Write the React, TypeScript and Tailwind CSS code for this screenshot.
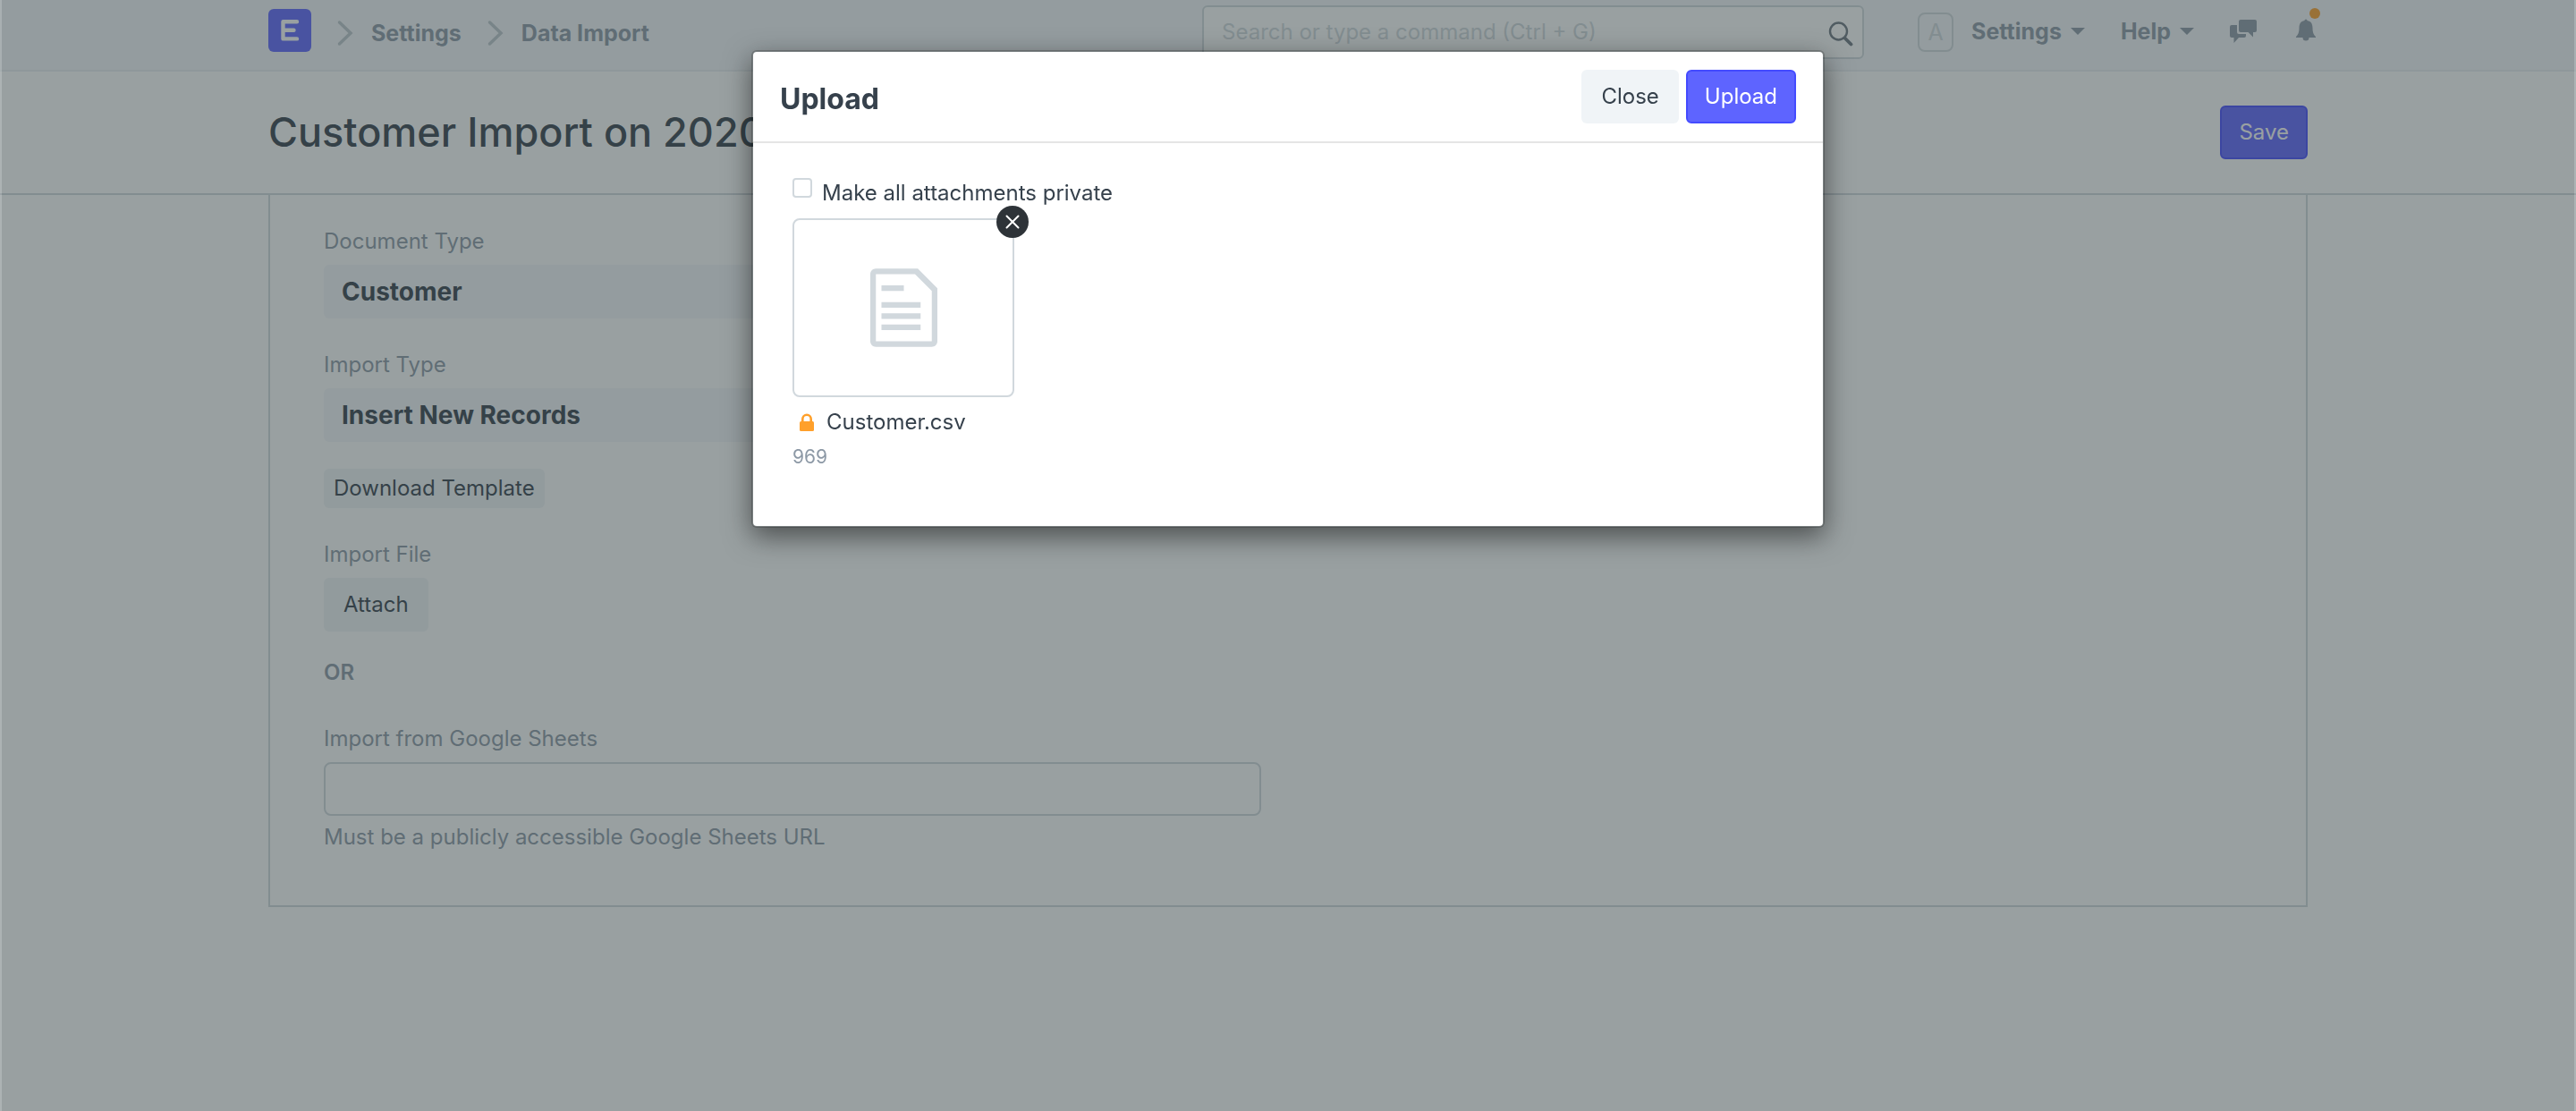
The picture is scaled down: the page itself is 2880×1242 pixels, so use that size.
function Chevron() {
  return (
    <svg width="18" height="30" viewBox="0 0 18 30" fill="none" className="shrink-0" aria-hidden="true">
      <path d="M2.500 3 15 15 2.500 27" stroke="#bdc6cc" strokeWidth="3.500" strokeLinecap="round" />
    </svg>
  );
}

function Caret() {
  return (
    <svg width="16" height="8" viewBox="0 0 16 8" className="shrink-0" aria-hidden="true">
      <path d="M0 0h16L8 8z" fill="currentColor" />
    </svg>
  );
}

function Navbar() {
  return (
    <nav className="h-20 border-b-2 border-[#ebeff2] bg-[#f5f7fa]">
      <div className="mx-auto flex h-full max-w-[2280px] items-start">
        <a href="#home" aria-label="Home" className="mt-2.5 shrink-0">
          <svg width="48" height="48" viewBox="0 0 48 48" aria-hidden="true">
            <rect width="48" height="48" rx="6" fill="#5e64ff" />
            <path
              d="M32 14.2H16.5v19.2H32M16.5 23.7h12"
              fill="none"
              stroke="#fff"
              strokeWidth="4.4"
              strokeLinecap="round"
              strokeLinejoin="round"
            />
          </svg>
        </a>
        <div className="mt-5 flex items-center text-[25px] font-bold leading-[34px]">
          <span className="ml-[29px] mr-5"><Chevron /></span>
          <a href="#settings">Settings</a>
          <span className="ml-[29px] mr-5"><Chevron /></span>
          <a href="#data-import">Data Import</a>
        </div>
        <div className="ml-auto mt-1.5 flex h-[60px] w-[740px] items-center rounded-md border-2 border-[#d1d8dd] bg-white pl-5 pr-2.5">
          <input
            type="text"
            aria-label="Search"
            placeholder="Search or type a command (Ctrl + G)"
            className="min-w-0 flex-1 bg-transparent leading-[34px] outline-none placeholder:text-[#d1d8dd]"
          />
          <svg width="28" height="32" viewBox="0 0 28 32" fill="none" stroke="#6c7680" aria-hidden="true">
            <circle cx="11.500" cy="15" r="9.500" strokeWidth="2.400" />
            <path d="M18.500 22.500l7 7" strokeWidth="3.800" strokeLinecap="round" />
          </svg>
        </div>
        <div className="ml-[60px] flex items-start text-[25px] font-bold leading-[34px]">
          <span className="mt-3.5 flex h-11 w-10 items-center justify-center rounded-lg border-2 border-[#d1d8dd] font-normal text-[#d1d8dd]">
            A
          </span>
          <button type="button" className="ml-5 mt-[18px] flex items-center gap-2.5">
            Settings <Caret />
          </button>
          <button type="button" className="ml-10 mt-[18px] flex items-center gap-2.5">
            Help <Caret />
          </button>
          <button type="button" aria-label="Chat" className="ml-10 mt-5">
            <svg width="31" height="30" viewBox="0 0 31 30" fill="currentColor" aria-hidden="true">
              <path d="M2 8h6v8q0 2 2 2h8v2q0 2-2 2h-6l-5.500 6v-6H2q-2 0-2-2V10q0-2 2-2z" />
              <path d="M12 2h16q2 0 2 2v10q0 2-2 2h-2v5.500L20.500 16H12q-2 0-2-2V4q0-2 2-2z" />
            </svg>
          </button>
          <button type="button" aria-label="Notifications" className="relative ml-[42px] mr-[-10px] mt-5">
            <svg width="24" height="28" viewBox="0 0 24 28" fill="currentColor" aria-hidden="true">
              <path d="M12 1.500a1.500 1.500 0 0 1 1.500 1.500c4.500.8 6 4 6 8.500 0 5 1.500 7.500 3.500 9.500V22H1v-1c2-2 3.500-4.500 3.500-9.500 0-4.500 1.500-7.700 6-8.500A1.500 1.500 0 0 1 12 1.500zM8.500 22h7a3.500 3.500 0 0 1-7 0z" />
            </svg>
            <span className="absolute -right-1 -top-[11px] h-3 w-3 rounded-full bg-[#ffa02b]" />
          </button>
        </div>
      </div>
    </nav>
  );
}

function PageHead() {
  return (
    <header className="border-b-2 border-[#d1d8dd] bg-white">
      <div className="mx-auto flex h-[136px] max-w-[2280px] items-center justify-between">
        <h1 className="text-[45px] font-medium leading-[60px] text-[#36414c]">Customer Import on 2020</h1>
        <button
          type="button"
          className="h-[60px] rounded-md border-2 border-[#444bff] bg-[#5e64ff] px-[19px] text-white"
        >
          Save
        </button>
      </div>
    </header>
  );
}

function ReadOnlyField({ label, value }: { label: string; value: string }) {
  return (
    <div className="mb-[35px]">
      <div className="mb-[9px]">{label}</div>
      <div className="flex h-[60px] items-center rounded-md bg-[#f5f7fa] px-5 text-[28px] font-bold text-[#36414c]">
        {value}
      </div>
    </div>
  );
}

function ImportForm() {
  return (
    <main className="mx-auto max-w-[2280px] border-x-2 border-b-2 border-[#d1d8dd] bg-white px-[60px] pb-[59px] pt-[35px] leading-[34px]">
      <div className="flex max-w-[1048px] flex-col">
        <ReadOnlyField label="Document Type" value="Customer" />
        <ReadOnlyField label="Import Type" value="Insert New Records" />
        <button type="button" className="-mt-[5px] h-11 self-start rounded-md bg-[#f0f4f7] px-[11px] text-[#36414c]">
          Download Template
        </button>
        <div className="mb-[9px] mt-[35px]">Import File</div>
        <button type="button" className="h-[60px] self-start rounded-md bg-[#f0f4f7] px-[22px] text-[#36414c]">
          Attach
        </button>
        <div className="mt-[29px] font-semibold">OR</div>
        <label htmlFor="sheets-url" className="mb-[9px] mt-10">
          Import from Google Sheets
        </label>
        <input
          id="sheets-url"
          type="text"
          className="h-[60px] w-full rounded-lg border-2 border-[#d1d8dd] bg-white px-5 text-[#36414c] outline-none"
        />
        <p className="mt-[7px]">Must be a publicly accessible Google Sheets URL</p>
      </div>
    </main>
  );
}

function FilePreview() {
  return (
    <div className="mt-[11px] w-[248px]">
      <div className="relative flex h-[200px] items-center justify-center rounded-lg border-2 border-[#d1d8dd]">
        <svg width="75" height="100" viewBox="0 0 12 16" fill="#d1d8dd" aria-hidden="true">
          <path d="M6 5H2V4h4v1zM2 8h7V7H2v1zm0 2h7V9H2v1zm0 2h7v-1H2v1zm10-7.500V14c0 .55-.45 1-1 1H1c-.55 0-1-.45-1-1V2c0-.55.45-1 1-1h7.500L12 4.500zM11 5L8 2H1v12h10V5z" />
        </svg>
        <button
          type="button"
          aria-label="Remove file"
          className="absolute -right-[18px] -top-4 flex h-9 w-9 items-center justify-center rounded-full bg-[#2e3338]"
        >
          <svg width="16" height="16" viewBox="0 0 16 16" stroke="#fff" strokeWidth="2" strokeLinecap="round" aria-hidden="true">
            <path d="M1.500 1.500l13 13M14.500 1.500l-13 13" />
          </svg>
        </button>
      </div>
      <div className="mt-[11px] flex items-center pl-2">
        <svg width="16" height="20" viewBox="0 0 16 20" aria-hidden="true">
          <rect y="9" width="16" height="11" rx="1.500" fill="#ffa02b" />
          <path d="M3.300 10V6.500a4.700 4.700 0 0 1 9.400 0V10" fill="none" stroke="#ffa02b" strokeWidth="2.600" />
        </svg>
        <span className="ml-3.5">Customer.csv</span>
      </div>
      <div className="mt-[7px] text-[21px] leading-[30px] text-[#8d99a6]">969</div>
    </div>
  );
}

function UploadDialog() {
  return (
    <div className="fixed inset-0 border-x-2 border-white/20 bg-[#334143]/50">
      <section
        role="dialog"
        aria-modal="true"
        aria-labelledby="upload-title"
        className="mx-auto mt-14 max-w-[1200px] rounded-md border-2 border-black/20 bg-white bg-clip-padding text-[#36414c] shadow-[0_10px_30px_rgba(0,0,0,0.5)]"
      >
        <header className="flex items-center justify-between border-b-2 border-[#e5e5e5] px-[30px] py-5">
          <h2 id="upload-title" className="pt-1.5 text-[32px] font-bold leading-10">Upload</h2>
          <div className="flex gap-2">
            <button type="button" className="h-[60px] rounded-md bg-[#f0f4f7] px-[22px]">Close</button>
            <button type="button" className="h-[60px] rounded-md border-2 border-[#444bff] bg-[#5e64ff] px-[19px] text-white">
              Upload
            </button>
          </div>
        </header>
        <div className="px-11 pb-[62px] pt-[39px] leading-[34px]">
          <label className="flex items-start gap-[11px]">
            <input
              type="checkbox"
              className="h-[22px] w-[22px] shrink-0 appearance-none rounded border-2 border-[#d1d8dd] bg-white"
            />
            Make all attachments private
          </label>
          <FilePreview />
        </div>
      </section>
    </div>
  );
}

export default function App() {
  return (
    <div className="min-h-screen bg-white font-['Inter',sans-serif] text-2xl text-[#8d99a6]">
      <Navbar />
      <PageHead />
      <ImportForm />
      <UploadDialog />
    </div>
  );
}
